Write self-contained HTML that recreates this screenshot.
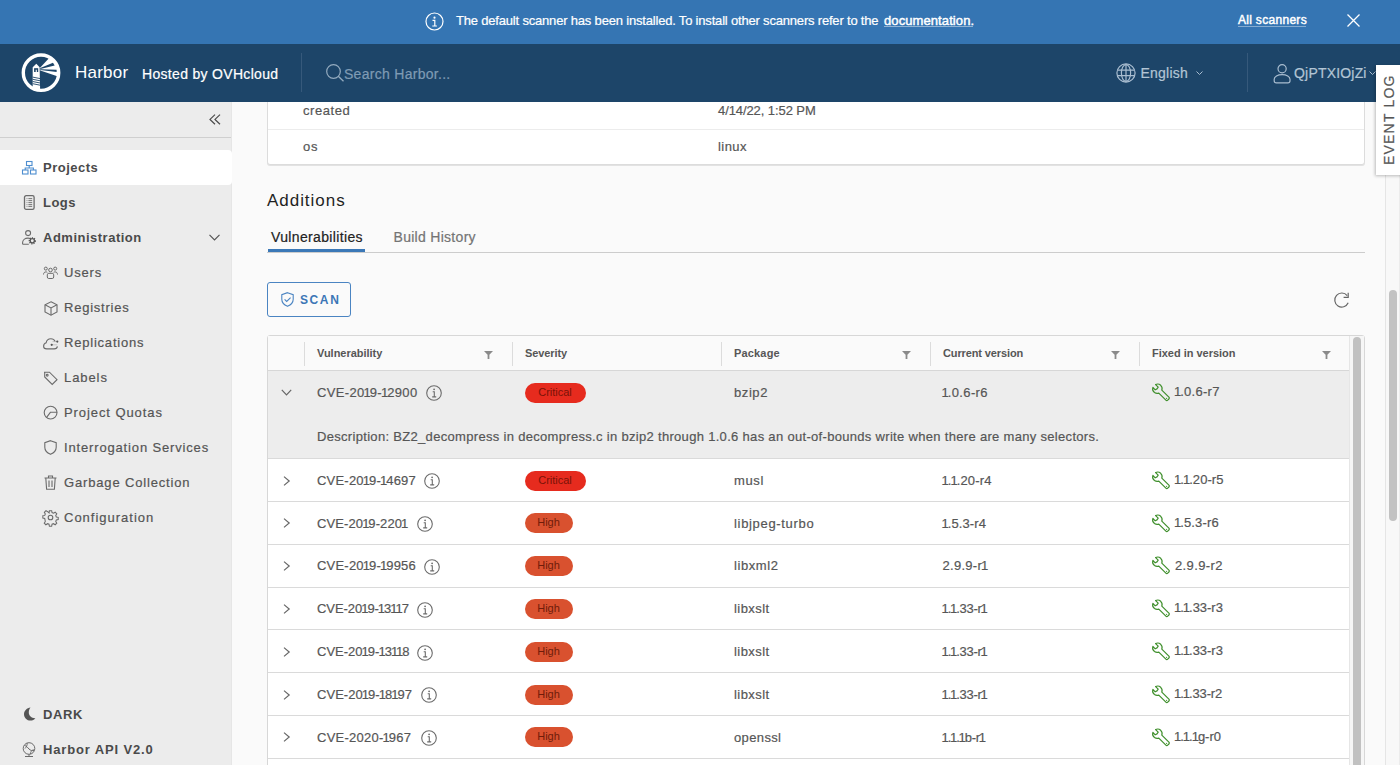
<!DOCTYPE html>
<html><head><meta charset="utf-8">
<style>
*{box-sizing:border-box;}
html,body{margin:0;padding:0;width:1400px;height:765px;overflow:hidden;font-family:"Liberation Sans",sans-serif;background:#fafafa;}
.abs{position:absolute;}
.t{position:absolute;white-space:nowrap;line-height:1;-webkit-text-stroke:0.2px currentColor;}
.t b{-webkit-text-stroke:0;}
svg{position:absolute;overflow:visible;}
#banner{z-index:11;left:0;top:0;width:1400px;height:44px;background:#3575b3;color:#fff;}
#header{z-index:10;left:0;top:43px;width:1400px;height:59px;background:#1d4569;color:#fff;}
#side{z-index:5;left:0;top:102px;width:232px;height:663px;background:#ececec;}
.row{position:absolute;left:268px;width:1081px;height:42.8px;border-bottom:1px solid #dadada;}
.badge{position:absolute;height:20px;border-radius:10px;font-size:11px;line-height:18px;text-align:center;}
.crit{background:#e62b1e;color:#7a1308;width:61px;}
.high{background:#d9512f;color:#6f1c0a;width:48px;}
</style></head>
<body>
<div id="banner" class="abs">
<svg style="left:425px;top:12px" width="19" height="19" viewBox="0 0 19 19"><circle cx="9.5" cy="9.5" r="8.5" fill="none" stroke="#fff" stroke-width="1.2"/><circle cx="9.5" cy="5.7" r="1.1" fill="#fff"/><path d="M7.5 8.3h2.3v5.7M7.3 14h4.6" stroke="#fff" stroke-width="1.2" fill="none"/></svg>
<div class="t" style="left:456px;top:14.00px;font-size:13px;letter-spacing:-0.187px;">The default scanner has been installed. To install other scanners refer to the</div>
<div class="t" style="left:884px;top:14.00px;font-size:13px;-webkit-text-stroke:0.45px #fff;letter-spacing:0.09px;">documentation.</div>
<div class="abs" style="left:884px;top:26px;width:89px;height:1px;background:rgba(255,255,255,.45)"></div>
<div class="t" style="left:1238px;top:13.84px;font-size:12px;-webkit-text-stroke:0.45px #fff;letter-spacing:0.3px;">All scanners</div>
<div class="abs" style="left:1238px;top:25.5px;width:68px;height:1.5px;background:rgba(255,255,255,.4)"></div>
<svg style="left:1347px;top:14px" width="13" height="13" viewBox="0 0 13 13"><path d="M0.5 0.5L12.5 12.5M12.5 0.5L0.5 12.5" stroke="#fff" stroke-width="1.3"/></svg>
</div>
<div id="header" class="abs">
<svg style="left:0px;top:0px" width="70" height="59" viewBox="0 0 70 59">
    <defs><clipPath id="lc"><circle cx="41" cy="29.7" r="17"/></clipPath></defs>
    <circle cx="41" cy="29.7" r="17.7" fill="none" stroke="#fff" stroke-width="3.4"/>
    <g clip-path="url(#lc)">
    <path d="M32.7 24.3L36.3 20.8L39.6 24.3L40.2 50H32.7Z" fill="#fff"/>
    <rect x="34.1" y="25.2" width="4.1" height="3.8" fill="#1d4569"/>
    <rect x="35.7" y="26.7" width="1.1" height="2.4" fill="#fff"/>
    <path d="M32.7 34.1L40.2 35.6M32.7 36.3L40.2 37.8M32.7 38.5L40.2 40M32.7 40.7L40.2 42.2" stroke="#1d4569" stroke-width="0.9"/>
    <path d="M40.3 24.6L56.1 7.6H64V34.6H61.1L40.3 27.5Z" fill="#fff"/>
    <path d="M40.3 25.0L53.0 19.7L54.7 22.4L40.3 26.1Z" fill="#1d4569"/>
    <path d="M40.3 26.3L56.6 26.8L56.6 29.1L40.3 27.0Z" fill="#1d4569"/>
    </g>
  </svg>
<div class="t" style="left:75px;top:21.21px;font-size:17px;-webkit-text-stroke:0;letter-spacing:0.22px;">Harbor</div>
<div class="t" style="left:142px;top:23.75px;font-size:14px;letter-spacing:0.312px;">Hosted by OVHcloud</div>
<div class="abs" style="left:301px;top:10px;width:1px;height:39px;background:#36597b"></div>
<svg style="left:326px;top:21px" width="19" height="18" viewBox="0 0 19 18"><circle cx="7.5" cy="7.5" r="6.8" fill="none" stroke="#94abbf" stroke-width="1.2"/><path d="M12.3 12.3L17.5 17.3" stroke="#94abbf" stroke-width="1.3"/></svg>
<div class="t" style="left:344px;top:23.75px;font-size:14px;color:#7f9bb4;letter-spacing:0.287px;">Search Harbor...</div>
<svg style="left:1116px;top:20px" width="20" height="20" viewBox="0 0 20 20"><g fill="none" stroke="#a9bdd0" stroke-width="1.2"><circle cx="10" cy="10" r="9.1"/><ellipse cx="10" cy="10" rx="4.6" ry="8.4"/><path d="M10 1.5v17M1.8 7.2h16.4M1.8 12.6h16.4"/></g></svg>
<div class="t" style="left:1140.5px;top:23.35px;font-size:14px;color:#b3c5d5;letter-spacing:0.217px;">English</div>
<svg style="left:1196px;top:28px" width="7" height="4" viewBox="0 0 7 4"><path d="M0.5 0.5L3.5 3.5L6.5 0.5" stroke="#a9bdd0" stroke-width="1" fill="none"/></svg>
<div class="abs" style="left:1247px;top:10px;width:1px;height:39px;background:#36597b"></div>
<svg style="left:1273px;top:21px" width="18" height="20" viewBox="0 0 18 20"><g fill="none" stroke="#a9bdd0" stroke-width="1.2"><circle cx="9.1" cy="4.7" r="4.1"/><path d="M1.2 16.8v-1.5c0-2.6 3.4-4.6 7.9-4.6s7.9 2 7.9 4.6v1.5q0 2.1-2.1 2.1h-11.6q-2.1 0-2.1-2.1z"/></g></svg>
<div class="t" style="left:1294px;top:23.35px;font-size:14px;color:#b3c5d5;letter-spacing:0.189px;">QjPTXIOjZi</div>
<svg style="left:1369px;top:28px" width="7" height="4" viewBox="0 0 7 4"><path d="M0.5 0.5L3.5 3.5L6.5 0.5" stroke="#a9bdd0" stroke-width="1" fill="none"/></svg>
</div>
<div id="side" class="abs">
<svg style="left:208.5px;top:12.3px" width="12" height="11" viewBox="0 0 12 11"><path d="M6 0.6L1 5.4L6 10.2M11 0.6L6 5.4L11 10.2" stroke="#4a4a4a" stroke-width="1.2" fill="none"/></svg>
<div class="abs" style="left:0;top:35px;width:232px;height:1px;background:#cfcfcf"></div>
<div class="abs" style="left:231px;top:0;width:1px;height:663px;background:#e6e6e6"></div>
<div class="abs" style="left:0;top:48px;width:232px;height:34.5px;background:#fff;border-radius:0 4px 4px 0"></div>
<svg style="left:22px;top:59px" width="15" height="14" viewBox="0 0 15 14"><g fill="none" stroke="#4e8ed0" stroke-width="1.1"><rect x="4.5" y="0.5" width="5.5" height="4"/><rect x="0.5" y="9" width="5.5" height="4"/><rect x="8.5" y="9" width="5.5" height="4"/><path d="M7.2 4.5v2.5M3.2 9V7h8.2v2"/></g></svg>
<div class="t" style="left:43px;top:58.80px;font-size:13px;font-weight:bold;-webkit-text-stroke:0;color:#4a4a4a;letter-spacing:0.486px;">Projects</div>
<svg style="left:23px;top:93px" width="13" height="15" viewBox="0 0 13 15"><rect x="1.5" y="0.7" width="9.6" height="13.6" rx="1.6" fill="none" stroke="#6b6b6b" stroke-width="1.3"/><path d="M3.6 3.6h0.8M5.4 3.6h3.8M3.6 5.6h0.8M5.4 5.6h3.8M3.6 7.6h0.8M5.4 7.6h3.8M3.6 9.6h0.8M5.4 9.6h3.8M3.6 11.4h0.8M5.4 11.4h3.8" stroke="#777" stroke-width="1"/></svg>
<div class="t" style="left:43px;top:93.80px;font-size:13px;font-weight:bold;-webkit-text-stroke:0;color:#4a4a4a;letter-spacing:0.467px;">Logs</div>
<svg style="left:22px;top:128px" width="15" height="16" viewBox="0 0 15 16"><g fill="none" stroke="#6b6b6b" stroke-width="1.1"><circle cx="6.1" cy="3.1" r="2.5"/><path d="M0.6 14.3V12.6C0.6 9.9 3 8.1 6 8.1C6.9 8.1 7.6 8.2 8.2 8.5M0.6 14.3H6.8"/></g><circle cx="10.3" cy="10.8" r="2.9" fill="none" stroke="#555" stroke-width="1.5" stroke-dasharray="1.1 1.05"/><circle cx="10.3" cy="10.8" r="2.1" fill="none" stroke="#555" stroke-width="1.3"/></svg>
<div class="t" style="left:43px;top:128.80px;font-size:13px;font-weight:bold;-webkit-text-stroke:0;color:#4a4a4a;letter-spacing:0.5px;">Administration</div>
<svg style="left:209px;top:132px" width="11" height="7" viewBox="0 0 11 7"><path d="M0.5 0.8L5.5 5.8L10.5 0.8" stroke="#555" stroke-width="1.2" fill="none"/></svg>
<svg style="left:43px;top:164px" width="15" height="13" viewBox="0 0 15 13"><g fill="none" stroke="#6b6b6b" stroke-width="1"><circle cx="7.5" cy="4" r="1.8"/><circle cx="2.8" cy="2.6" r="1.5"/><circle cx="12.2" cy="2.6" r="1.5"/><rect x="4.3" y="7.3" width="6.4" height="5.2" rx="1.5"/><path d="M0.5 8.5c0-1.5 1-2.6 2.4-2.6c0.6 0 1 0.2 1.4 0.4M14.5 8.5c0-1.5-1-2.6-2.4-2.6c-0.6 0-1 0.2-1.4 0.4"/></g></svg>
<div class="t" style="left:64px;top:164.40px;font-size:13px;color:#555;letter-spacing:0.825px;">Users</div>
<svg style="left:44px;top:199px" width="14" height="15" viewBox="0 0 14 15"><g fill="none" stroke="#6b6b6b" stroke-width="1.1"><path d="M7 0.8L13 3.8V11L7 14.2L1 11V3.8Z"/><path d="M1 3.8L7 7L13 3.8M7 7v7.2"/></g></svg>
<div class="t" style="left:64px;top:199.40px;font-size:13px;color:#555;letter-spacing:0.767px;">Registries</div>
<svg style="left:43px;top:235.5px" width="16" height="12" viewBox="0 0 16 12"><g fill="none" stroke="#6b6b6b" stroke-width="1.1"><path d="M12.2 3.4C11.4 1.7 9.8 0.7 7.9 0.7C5.4 0.7 3.5 2.5 3.2 4.8C1.7 5.3 0.6 6.6 0.6 8.2C0.6 9.9 2 10.9 3.7 10.9H11.2C12.9 10.9 14.2 10 14.4 8.4"/><path d="M8.8 6.8H14.2M9.5 3.6H14.5" stroke-width="0.6" stroke="#aaa"/></g><circle cx="14.3" cy="3.6" r="1.1" fill="#555"/><circle cx="8.7" cy="6.8" r="1.1" fill="#555"/></svg>
<div class="t" style="left:64px;top:234.40px;font-size:13px;color:#555;letter-spacing:0.791px;">Replications</div>
<svg style="left:43px;top:269px" width="15" height="14" viewBox="0 0 15 14"><g fill="none" stroke="#6b6b6b" stroke-width="1.1"><path d="M1 1.2h5.5l7.5 7.5l-4.8 4.8L1.7 6V1.2z"/><circle cx="4.2" cy="4.2" r="0.9"/></g></svg>
<div class="t" style="left:64px;top:269.40px;font-size:13px;color:#555;letter-spacing:0.92px;">Labels</div>
<svg style="left:43px;top:303px" width="15" height="15" viewBox="0 0 15 15"><g fill="none" stroke="#6b6b6b" stroke-width="1.1"><circle cx="7.6" cy="7.6" r="6.4"/><path d="M3.6 12.3L7.4 7.3H14.1"/></g></svg>
<div class="t" style="left:64px;top:304.40px;font-size:13px;color:#555;letter-spacing:0.915px;">Project Quotas</div>
<svg style="left:44px;top:338px" width="13" height="15" viewBox="0 0 13 15"><path d="M6.5 0.7L12.2 2.7V7.2c0 3.3-2.5 5.8-5.7 7.1C3.3 13 0.8 10.5 0.8 7.2V2.7Z" fill="none" stroke="#6b6b6b" stroke-width="1.1"/></svg>
<div class="t" style="left:64px;top:339.40px;font-size:13px;color:#555;letter-spacing:0.843px;">Interrogation Services</div>
<svg style="left:44px;top:373px" width="13" height="15" viewBox="0 0 13 15"><g fill="none" stroke="#6b6b6b" stroke-width="1.1"><path d="M0.5 3h12M4.5 3V1h4v2M1.8 3l0.8 11.2h7.8L11.2 3M5 5.5v6.5M8 5.5v6.5"/></g></svg>
<div class="t" style="left:64px;top:374.40px;font-size:13px;color:#555;letter-spacing:0.841px;">Garbage Collection</div>
<svg style="left:43px;top:408px" width="15" height="15" viewBox="0 0 15 15"><g fill="none" stroke="#6b6b6b" stroke-width="1.1"><circle cx="7.5" cy="7.5" r="2.3"/><path d="M6.3 0.7h2.4l0.4 2l1.5 0.7l1.8-1.1l1.7 1.7l-1.1 1.8l0.6 1.5l2 0.4v2.4l-2 0.4l-0.6 1.5l1.1 1.8l-1.7 1.7l-1.8-1.1l-1.5 0.6l-0.4 2H6.3l-0.4-2l-1.5-0.6l-1.8 1.1l-1.7-1.7l1.1-1.8L1.4 8.9l-2-0.4V6.1l2-0.4l0.6-1.5L1 2.4l1.7-1.7l1.8 1.1L6 3.1z" transform="translate(0.4 0) scale(0.95)"/></g></svg>
<div class="t" style="left:64px;top:409.40px;font-size:13px;color:#555;letter-spacing:0.992px;">Configuration</div>
<svg style="left:23px;top:605px" width="13" height="14" viewBox="0 0 13 14"><path d="M7.5 0.5C4 0.9 1 3.7 1 7.2C1 10.8 3.9 13.6 7.5 13.6c2 0 3.7-0.9 4.9-2.3C8.9 11.6 5.8 9 5.8 5.6C5.8 3.5 6.4 1.8 7.5 0.5Z" fill="#555"/></svg>
<div class="t" style="left:43px;top:606.30px;font-size:13px;font-weight:bold;-webkit-text-stroke:0;color:#4a4a4a;letter-spacing:0.6px;">DARK</div>
<svg style="left:22px;top:640px" width="14" height="16" viewBox="0 0 14 16"><g fill="none" stroke="#6b6b6b" stroke-width="1"><circle cx="7" cy="6.5" r="5.8"/><path d="M2.5 3.5c2 0.3 3 2 4.5 3.5s3 1.8 5 1.5M5 1c0.5 2-0.5 4-2 5.5M8.5 12c0-2 1-3.5 3-4.5M3 14.5h8M7 12.3v2.2"/></g></svg>
<div class="t" style="left:43px;top:641.20px;font-size:13px;font-weight:bold;-webkit-text-stroke:0;color:#4a4a4a;letter-spacing:0.85px;">Harbor API V2.0</div>
</div>
<div class="abs" style="left:267px;top:60px;width:1098px;height:105px;background:#fff;border:1px solid #dcdcdc;border-radius:3px;box-shadow:0 1px 0 #e2e2e2"></div>
<div class="abs" style="left:268px;top:128.5px;width:1096px;height:1px;background:#ececec"></div>
<div class="t" style="left:303px;top:104.00px;font-size:13px;color:#565656;letter-spacing:0.567px;">created</div>
<div class="t" style="left:718px;top:104.00px;font-size:13px;color:#565656;letter-spacing:-0.087px;">4/14/22, 1:52 PM</div>
<div class="t" style="left:303px;top:140.10px;font-size:13px;color:#565656;letter-spacing:0.8px;">os</div>
<div class="t" style="left:718px;top:139.70px;font-size:13px;color:#565656;letter-spacing:0.425px;">linux</div>
<div class="t" style="left:267px;top:192.21px;font-size:17px;color:#1f1f1f;-webkit-text-stroke:0;letter-spacing:0.962px;">Additions</div>
<div class="t" style="left:271px;top:229.55px;font-size:14px;color:#222;letter-spacing:0.35px;">Vulnerabilities</div>
<div class="t" style="left:393.5px;top:229.55px;font-size:14px;color:#747474;letter-spacing:0.292px;">Build History</div>
<div class="abs" style="left:267px;top:252px;width:1098px;height:1px;background:#cccccc"></div>
<div class="abs" style="left:268px;top:249px;width:97px;height:3px;background:#3b78b7"></div>
<div class="abs" style="left:267px;top:282px;width:84px;height:35px;border:1px solid #4a84c2;border-radius:3px;"></div>
<svg style="left:281px;top:292px" width="13" height="15" viewBox="0 0 13 15"><path d="M6.5 0.7L12.2 2.7V7.2c0 3.3-2.5 5.8-5.7 7.1C3.3 13 0.8 10.5 0.8 7.2V2.7Z" fill="none" stroke="#4a84c2" stroke-width="1.1"/><path d="M3.6 7.4L5.7 9.5L9.6 5.6" fill="none" stroke="#4a84c2" stroke-width="1.1"/></svg>
<div class="t" style="left:300px;top:294.44px;font-size:12px;font-weight:bold;-webkit-text-stroke:0;color:#3b76b6;letter-spacing:1.6px;">SCAN</div>
<svg style="left:1334px;top:292px" width="17" height="17" viewBox="0 0 17 17"><path d="M14.2 10.8A7 7 0 1 1 13.2 3.6" fill="none" stroke="#666" stroke-width="1.2"/><path d="M9.6 5.3h4.6V0.7" fill="none" stroke="#666" stroke-width="1.2"/></svg>
<div class="abs" style="left:267px;top:335px;width:1098px;height:460px;background:#fff;border:1px solid #d7d7d7;border-radius:3px;"></div>
<div class="abs" style="left:268px;top:336px;width:1081px;height:35px;background:#fafafa;border-bottom:1px solid #d7d7d7"></div>
<div class="abs" style="left:304px;top:342px;width:1px;height:24px;background:#dcdcdc"></div>
<div class="abs" style="left:512px;top:342px;width:1px;height:24px;background:#dcdcdc"></div>
<div class="abs" style="left:721px;top:342px;width:1px;height:24px;background:#dcdcdc"></div>
<div class="abs" style="left:930px;top:342px;width:1px;height:24px;background:#dcdcdc"></div>
<div class="abs" style="left:1139px;top:342px;width:1px;height:24px;background:#dcdcdc"></div>
<div class="t" style="left:317px;top:347.59px;font-size:11px;font-weight:bold;-webkit-text-stroke:0;color:#565656;letter-spacing:-0.025px;">Vulnerability</div>
<div class="t" style="left:525px;top:347.59px;font-size:11px;font-weight:bold;-webkit-text-stroke:0;color:#565656;letter-spacing:-0.086px;">Severity</div>
<div class="t" style="left:734px;top:347.59px;font-size:11px;font-weight:bold;-webkit-text-stroke:0;color:#565656;letter-spacing:0.167px;">Package</div>
<div class="t" style="left:943px;top:347.59px;font-size:11px;font-weight:bold;-webkit-text-stroke:0;color:#565656;letter-spacing:-0.121px;">Current version</div>
<div class="t" style="left:1152px;top:347.59px;font-size:11px;font-weight:bold;-webkit-text-stroke:0;color:#565656;letter-spacing:-0.02px;">Fixed in version</div>
<svg style="left:484px;top:351px" width="9" height="8" viewBox="0 0 9 8"><path d="M0 0h9L5.4 3.8V8H3.6V3.8Z" fill="#8a8a8a"/></svg>
<svg style="left:902px;top:351px" width="9" height="8" viewBox="0 0 9 8"><path d="M0 0h9L5.4 3.8V8H3.6V3.8Z" fill="#8a8a8a"/></svg>
<svg style="left:1111px;top:351px" width="9" height="8" viewBox="0 0 9 8"><path d="M0 0h9L5.4 3.8V8H3.6V3.8Z" fill="#8a8a8a"/></svg>
<svg style="left:1322px;top:351px" width="9" height="8" viewBox="0 0 9 8"><path d="M0 0h9L5.4 3.8V8H3.6V3.8Z" fill="#8a8a8a"/></svg>
<div class="row" style="top:371px;height:87.5px;background:#ededed"></div>
<div class="row" style="top:459.20px"></div>
<div class="row" style="top:502.00px"></div>
<div class="row" style="top:544.80px"></div>
<div class="row" style="top:587.60px"></div>
<div class="row" style="top:630.40px"></div>
<div class="row" style="top:673.20px"></div>
<div class="row" style="top:716.00px"></div>
<div class="row" style="top:758.80px"></div>
<svg style="left:281px;top:389.0px" width="11" height="7" viewBox="0 0 11 7"><path d="M0.8 0.8L5.5 5.8L10.2 0.8" stroke="#666" stroke-width="1.2" fill="none"/></svg>
<div class="t" style="left:317px;top:385.80px;font-size:13px;color:#565656;letter-spacing:0.331px;">CVE-20<span style="margin-left:-1.0px;letter-spacing:-1.0px">1</span>9-<span style="margin-left:-1.0px;letter-spacing:-1.0px">1</span>2900</div>
<svg style="left:425.7px;top:385.3px" width="16" height="16" viewBox="0 0 16 16"><circle cx="8" cy="8" r="7.3" fill="none" stroke="#6b6b6b" stroke-width="1.1"/><circle cx="8.1" cy="4.3" r="0.9" fill="#6b6b6b"/><path d="M6.7 6.8h1.6v5.1M6.2 11.9h4" stroke="#6b6b6b" stroke-width="1.1" fill="none"/></svg>
<div class="badge crit" style="left:524.5px;top:382.5px">Critical</div>
<div class="t" style="left:734px;top:385.80px;font-size:13px;color:#565656;letter-spacing:0.575px;">bzip2</div>
<div class="t" style="left:942.5px;top:385.80px;font-size:13px;color:#565656;letter-spacing:0.371px;"><span style="margin-left:-1.0px;letter-spacing:-1.0px">1</span>.0.6-r6</div>
<svg style="left:1152.0px;top:382.7px" width="19" height="19" viewBox="0 0 19 19"><path d="M3.6 1.6L6.2 4.2L5 5.9L3.2 6.8L0.9 4.4C0.3 6.2 0.9 8.3 2.5 9.5C3.8 10.4 5.4 10.6 6.8 10.1L13.9 17.2C14.4 17.7 15.2 17.7 15.7 17.2L16.9 16C17.4 15.5 17.4 14.7 16.9 14.2L9.8 7.1C10.4 5.5 10 3.6 8.7 2.3C7.3 1 5.3 0.7 3.6 1.6Z" fill="none" stroke="#3f8f2c" stroke-width="1.2" stroke-linejoin="round"/><circle cx="14.6" cy="15.3" r="0.6" fill="#3f8f2c"/></svg>
<div class="t" style="left:1175px;top:385.00px;font-size:13px;color:#565656;letter-spacing:0.271px;"><span style="margin-left:-1.0px;letter-spacing:-1.0px">1</span>.0.6-r7</div>
<svg style="left:282.5px;top:475.5px" width="8" height="10" viewBox="0 0 8 10"><path d="M1 0.6L6.2 5L1 9.4" stroke="#666" stroke-width="1.2" fill="none"/></svg>
<div class="t" style="left:317px;top:473.80px;font-size:13px;color:#565656;letter-spacing:0.208px;">CVE-20<span style="margin-left:-1.0px;letter-spacing:-1.0px">1</span>9-<span style="margin-left:-1.0px;letter-spacing:-1.0px">1</span>4697</div>
<svg style="left:424.3px;top:473.3px" width="16" height="16" viewBox="0 0 16 16"><circle cx="8" cy="8" r="7.3" fill="none" stroke="#6b6b6b" stroke-width="1.1"/><circle cx="8.1" cy="4.3" r="0.9" fill="#6b6b6b"/><path d="M6.7 6.8h1.6v5.1M6.2 11.9h4" stroke="#6b6b6b" stroke-width="1.1" fill="none"/></svg>
<div class="badge crit" style="left:524.5px;top:470.5px">Critical</div>
<div class="t" style="left:734px;top:473.80px;font-size:13px;color:#565656;letter-spacing:0.633px;">musl</div>
<div class="t" style="left:942.5px;top:473.80px;font-size:13px;color:#565656;letter-spacing:0.138px;"><span style="margin-left:-1.0px;letter-spacing:-1.0px">1</span>.<span style="margin-left:-1.0px;letter-spacing:-1.0px">1</span>.20-r4</div>
<svg style="left:1152.0px;top:470.7px" width="19" height="19" viewBox="0 0 19 19"><path d="M3.6 1.6L6.2 4.2L5 5.9L3.2 6.8L0.9 4.4C0.3 6.2 0.9 8.3 2.5 9.5C3.8 10.4 5.4 10.6 6.8 10.1L13.9 17.2C14.4 17.7 15.2 17.7 15.7 17.2L16.9 16C17.4 15.5 17.4 14.7 16.9 14.2L9.8 7.1C10.4 5.5 10 3.6 8.7 2.3C7.3 1 5.3 0.7 3.6 1.6Z" fill="none" stroke="#3f8f2c" stroke-width="1.2" stroke-linejoin="round"/><circle cx="14.6" cy="15.3" r="0.6" fill="#3f8f2c"/></svg>
<div class="t" style="left:1175px;top:473.00px;font-size:13px;color:#565656;letter-spacing:0.075px;"><span style="margin-left:-1.0px;letter-spacing:-1.0px">1</span>.<span style="margin-left:-1.0px;letter-spacing:-1.0px">1</span>.20-r5</div>
<svg style="left:282.5px;top:518.3px" width="8" height="10" viewBox="0 0 8 10"><path d="M1 0.6L6.2 5L1 9.4" stroke="#666" stroke-width="1.2" fill="none"/></svg>
<div class="t" style="left:317px;top:516.60px;font-size:13px;color:#565656;letter-spacing:0.1px;">CVE-20<span style="margin-left:-1.0px;letter-spacing:-1.0px">1</span>9-220<span style="margin-left:-1.0px;letter-spacing:-1.0px">1</span></div>
<svg style="left:417.0px;top:516.1px" width="16" height="16" viewBox="0 0 16 16"><circle cx="8" cy="8" r="7.3" fill="none" stroke="#6b6b6b" stroke-width="1.1"/><circle cx="8.1" cy="4.3" r="0.9" fill="#6b6b6b"/><path d="M6.7 6.8h1.6v5.1M6.2 11.9h4" stroke="#6b6b6b" stroke-width="1.1" fill="none"/></svg>
<div class="badge high" style="left:524.5px;top:513.3px">High</div>
<div class="t" style="left:734px;top:516.60px;font-size:13px;color:#565656;letter-spacing:0.675px;">libjpeg-turbo</div>
<div class="t" style="left:942.5px;top:516.60px;font-size:13px;color:#565656;letter-spacing:0.114px;"><span style="margin-left:-1.0px;letter-spacing:-1.0px">1</span>.5.3-r4</div>
<svg style="left:1152.0px;top:513.5px" width="19" height="19" viewBox="0 0 19 19"><path d="M3.6 1.6L6.2 4.2L5 5.9L3.2 6.8L0.9 4.4C0.3 6.2 0.9 8.3 2.5 9.5C3.8 10.4 5.4 10.6 6.8 10.1L13.9 17.2C14.4 17.7 15.2 17.7 15.7 17.2L16.9 16C17.4 15.5 17.4 14.7 16.9 14.2L9.8 7.1C10.4 5.5 10 3.6 8.7 2.3C7.3 1 5.3 0.7 3.6 1.6Z" fill="none" stroke="#3f8f2c" stroke-width="1.2" stroke-linejoin="round"/><circle cx="14.6" cy="15.3" r="0.6" fill="#3f8f2c"/></svg>
<div class="t" style="left:1175px;top:515.80px;font-size:13px;color:#565656;letter-spacing:0.143px;"><span style="margin-left:-1.0px;letter-spacing:-1.0px">1</span>.5.3-r6</div>
<svg style="left:282.5px;top:561.1px" width="8" height="10" viewBox="0 0 8 10"><path d="M1 0.6L6.2 5L1 9.4" stroke="#666" stroke-width="1.2" fill="none"/></svg>
<div class="t" style="left:317px;top:559.40px;font-size:13px;color:#565656;letter-spacing:0.208px;">CVE-20<span style="margin-left:-1.0px;letter-spacing:-1.0px">1</span>9-<span style="margin-left:-1.0px;letter-spacing:-1.0px">1</span>9956</div>
<svg style="left:424.3px;top:558.9px" width="16" height="16" viewBox="0 0 16 16"><circle cx="8" cy="8" r="7.3" fill="none" stroke="#6b6b6b" stroke-width="1.1"/><circle cx="8.1" cy="4.3" r="0.9" fill="#6b6b6b"/><path d="M6.7 6.8h1.6v5.1M6.2 11.9h4" stroke="#6b6b6b" stroke-width="1.1" fill="none"/></svg>
<div class="badge high" style="left:524.5px;top:556.1px">High</div>
<div class="t" style="left:734px;top:559.40px;font-size:13px;color:#565656;letter-spacing:0.583px;">libxml2</div>
<div class="t" style="left:942.5px;top:559.40px;font-size:13px;color:#565656;letter-spacing:0.286px;">2.9.9-r<span style="margin-left:-1.0px;letter-spacing:-1.0px">1</span></div>
<svg style="left:1152.0px;top:556.3px" width="19" height="19" viewBox="0 0 19 19"><path d="M3.6 1.6L6.2 4.2L5 5.9L3.2 6.8L0.9 4.4C0.3 6.2 0.9 8.3 2.5 9.5C3.8 10.4 5.4 10.6 6.8 10.1L13.9 17.2C14.4 17.7 15.2 17.7 15.7 17.2L16.9 16C17.4 15.5 17.4 14.7 16.9 14.2L9.8 7.1C10.4 5.5 10 3.6 8.7 2.3C7.3 1 5.3 0.7 3.6 1.6Z" fill="none" stroke="#3f8f2c" stroke-width="1.2" stroke-linejoin="round"/><circle cx="14.6" cy="15.3" r="0.6" fill="#3f8f2c"/></svg>
<div class="t" style="left:1175px;top:558.60px;font-size:13px;color:#565656;letter-spacing:0.371px;">2.9.9-r2</div>
<svg style="left:282.5px;top:603.9px" width="8" height="10" viewBox="0 0 8 10"><path d="M1 0.6L6.2 5L1 9.4" stroke="#666" stroke-width="1.2" fill="none"/></svg>
<div class="t" style="left:317px;top:602.20px;font-size:13px;color:#565656;letter-spacing:-0.062px;">CVE-20<span style="margin-left:-1.0px;letter-spacing:-1.0px">1</span>9-<span style="margin-left:-1.0px;letter-spacing:-1.0px">1</span>3<span style="margin-left:-1.0px;letter-spacing:-1.0px">1</span><span style="margin-left:-1.0px;letter-spacing:-1.0px">1</span>7</div>
<svg style="left:417.1px;top:601.7px" width="16" height="16" viewBox="0 0 16 16"><circle cx="8" cy="8" r="7.3" fill="none" stroke="#6b6b6b" stroke-width="1.1"/><circle cx="8.1" cy="4.3" r="0.9" fill="#6b6b6b"/><path d="M6.7 6.8h1.6v5.1M6.2 11.9h4" stroke="#6b6b6b" stroke-width="1.1" fill="none"/></svg>
<div class="badge high" style="left:524.5px;top:598.9px">High</div>
<div class="t" style="left:734px;top:602.20px;font-size:13px;color:#565656;letter-spacing:0.433px;">libxslt</div>
<div class="t" style="left:942.5px;top:602.20px;font-size:13px;color:#565656;letter-spacing:-0.312px;"><span style="margin-left:-1.0px;letter-spacing:-1.0px">1</span>.<span style="margin-left:-1.0px;letter-spacing:-1.0px">1</span>.33-r<span style="margin-left:-1.0px;letter-spacing:-1.0px">1</span></div>
<svg style="left:1152.0px;top:599.1px" width="19" height="19" viewBox="0 0 19 19"><path d="M3.6 1.6L6.2 4.2L5 5.9L3.2 6.8L0.9 4.4C0.3 6.2 0.9 8.3 2.5 9.5C3.8 10.4 5.4 10.6 6.8 10.1L13.9 17.2C14.4 17.7 15.2 17.7 15.7 17.2L16.9 16C17.4 15.5 17.4 14.7 16.9 14.2L9.8 7.1C10.4 5.5 10 3.6 8.7 2.3C7.3 1 5.3 0.7 3.6 1.6Z" fill="none" stroke="#3f8f2c" stroke-width="1.2" stroke-linejoin="round"/><circle cx="14.6" cy="15.3" r="0.6" fill="#3f8f2c"/></svg>
<div class="t" style="left:1175px;top:601.40px;font-size:13px;color:#565656;letter-spacing:-0.025px;"><span style="margin-left:-1.0px;letter-spacing:-1.0px">1</span>.<span style="margin-left:-1.0px;letter-spacing:-1.0px">1</span>.33-r3</div>
<svg style="left:282.5px;top:646.7px" width="8" height="10" viewBox="0 0 8 10"><path d="M1 0.6L6.2 5L1 9.4" stroke="#666" stroke-width="1.2" fill="none"/></svg>
<div class="t" style="left:317px;top:645.00px;font-size:13px;color:#565656;letter-spacing:0.008px;">CVE-20<span style="margin-left:-1.0px;letter-spacing:-1.0px">1</span>9-<span style="margin-left:-1.0px;letter-spacing:-1.0px">1</span>3<span style="margin-left:-1.0px;letter-spacing:-1.0px">1</span><span style="margin-left:-1.0px;letter-spacing:-1.0px">1</span>8</div>
<svg style="left:417.0px;top:644.5px" width="16" height="16" viewBox="0 0 16 16"><circle cx="8" cy="8" r="7.3" fill="none" stroke="#6b6b6b" stroke-width="1.1"/><circle cx="8.1" cy="4.3" r="0.9" fill="#6b6b6b"/><path d="M6.7 6.8h1.6v5.1M6.2 11.9h4" stroke="#6b6b6b" stroke-width="1.1" fill="none"/></svg>
<div class="badge high" style="left:524.5px;top:641.7px">High</div>
<div class="t" style="left:734px;top:645.00px;font-size:13px;color:#565656;letter-spacing:0.433px;">libxslt</div>
<div class="t" style="left:942.5px;top:645.00px;font-size:13px;color:#565656;letter-spacing:-0.312px;"><span style="margin-left:-1.0px;letter-spacing:-1.0px">1</span>.<span style="margin-left:-1.0px;letter-spacing:-1.0px">1</span>.33-r<span style="margin-left:-1.0px;letter-spacing:-1.0px">1</span></div>
<svg style="left:1152.0px;top:641.9px" width="19" height="19" viewBox="0 0 19 19"><path d="M3.6 1.6L6.2 4.2L5 5.9L3.2 6.8L0.9 4.4C0.3 6.2 0.9 8.3 2.5 9.5C3.8 10.4 5.4 10.6 6.8 10.1L13.9 17.2C14.4 17.7 15.2 17.7 15.7 17.2L16.9 16C17.4 15.5 17.4 14.7 16.9 14.2L9.8 7.1C10.4 5.5 10 3.6 8.7 2.3C7.3 1 5.3 0.7 3.6 1.6Z" fill="none" stroke="#3f8f2c" stroke-width="1.2" stroke-linejoin="round"/><circle cx="14.6" cy="15.3" r="0.6" fill="#3f8f2c"/></svg>
<div class="t" style="left:1175px;top:644.20px;font-size:13px;color:#565656;letter-spacing:-0.025px;"><span style="margin-left:-1.0px;letter-spacing:-1.0px">1</span>.<span style="margin-left:-1.0px;letter-spacing:-1.0px">1</span>.33-r3</div>
<svg style="left:282.5px;top:689.5px" width="8" height="10" viewBox="0 0 8 10"><path d="M1 0.6L6.2 5L1 9.4" stroke="#666" stroke-width="1.2" fill="none"/></svg>
<div class="t" style="left:317px;top:687.80px;font-size:13px;color:#565656;letter-spacing:0.046px;">CVE-20<span style="margin-left:-1.0px;letter-spacing:-1.0px">1</span>9-<span style="margin-left:-1.0px;letter-spacing:-1.0px">1</span>8<span style="margin-left:-1.0px;letter-spacing:-1.0px">1</span>97</div>
<svg style="left:421.0px;top:687.3px" width="16" height="16" viewBox="0 0 16 16"><circle cx="8" cy="8" r="7.3" fill="none" stroke="#6b6b6b" stroke-width="1.1"/><circle cx="8.1" cy="4.3" r="0.9" fill="#6b6b6b"/><path d="M6.7 6.8h1.6v5.1M6.2 11.9h4" stroke="#6b6b6b" stroke-width="1.1" fill="none"/></svg>
<div class="badge high" style="left:524.5px;top:684.5px">High</div>
<div class="t" style="left:734px;top:687.80px;font-size:13px;color:#565656;letter-spacing:0.433px;">libxslt</div>
<div class="t" style="left:942.5px;top:687.80px;font-size:13px;color:#565656;letter-spacing:-0.312px;"><span style="margin-left:-1.0px;letter-spacing:-1.0px">1</span>.<span style="margin-left:-1.0px;letter-spacing:-1.0px">1</span>.33-r<span style="margin-left:-1.0px;letter-spacing:-1.0px">1</span></div>
<svg style="left:1152.0px;top:684.7px" width="19" height="19" viewBox="0 0 19 19"><path d="M3.6 1.6L6.2 4.2L5 5.9L3.2 6.8L0.9 4.4C0.3 6.2 0.9 8.3 2.5 9.5C3.8 10.4 5.4 10.6 6.8 10.1L13.9 17.2C14.4 17.7 15.2 17.7 15.7 17.2L16.9 16C17.4 15.5 17.4 14.7 16.9 14.2L9.8 7.1C10.4 5.5 10 3.6 8.7 2.3C7.3 1 5.3 0.7 3.6 1.6Z" fill="none" stroke="#3f8f2c" stroke-width="1.2" stroke-linejoin="round"/><circle cx="14.6" cy="15.3" r="0.6" fill="#3f8f2c"/></svg>
<div class="t" style="left:1175px;top:687.00px;font-size:13px;color:#565656;letter-spacing:-0.125px;"><span style="margin-left:-1.0px;letter-spacing:-1.0px">1</span>.<span style="margin-left:-1.0px;letter-spacing:-1.0px">1</span>.33-r2</div>
<svg style="left:282.5px;top:732.3px" width="8" height="10" viewBox="0 0 8 10"><path d="M1 0.6L6.2 5L1 9.4" stroke="#666" stroke-width="1.2" fill="none"/></svg>
<div class="t" style="left:317px;top:730.60px;font-size:13px;color:#565656;letter-spacing:0.25px;">CVE-2020-<span style="margin-left:-1.0px;letter-spacing:-1.0px">1</span>967</div>
<svg style="left:421.0px;top:730.1px" width="16" height="16" viewBox="0 0 16 16"><circle cx="8" cy="8" r="7.3" fill="none" stroke="#6b6b6b" stroke-width="1.1"/><circle cx="8.1" cy="4.3" r="0.9" fill="#6b6b6b"/><path d="M6.7 6.8h1.6v5.1M6.2 11.9h4" stroke="#6b6b6b" stroke-width="1.1" fill="none"/></svg>
<div class="badge high" style="left:524.5px;top:727.3px">High</div>
<div class="t" style="left:734px;top:730.60px;font-size:13px;color:#565656;letter-spacing:0.367px;">openssl</div>
<div class="t" style="left:942.5px;top:730.60px;font-size:13px;color:#565656;letter-spacing:-0.3px;"><span style="margin-left:-1.0px;letter-spacing:-1.0px">1</span>.<span style="margin-left:-1.0px;letter-spacing:-1.0px">1</span>.<span style="margin-left:-1.0px;letter-spacing:-1.0px">1</span>b-r<span style="margin-left:-1.0px;letter-spacing:-1.0px">1</span></div>
<svg style="left:1152.0px;top:727.5px" width="19" height="19" viewBox="0 0 19 19"><path d="M3.6 1.6L6.2 4.2L5 5.9L3.2 6.8L0.9 4.4C0.3 6.2 0.9 8.3 2.5 9.5C3.8 10.4 5.4 10.6 6.8 10.1L13.9 17.2C14.4 17.7 15.2 17.7 15.7 17.2L16.9 16C17.4 15.5 17.4 14.7 16.9 14.2L9.8 7.1C10.4 5.5 10 3.6 8.7 2.3C7.3 1 5.3 0.7 3.6 1.6Z" fill="none" stroke="#3f8f2c" stroke-width="1.2" stroke-linejoin="round"/><circle cx="14.6" cy="15.3" r="0.6" fill="#3f8f2c"/></svg>
<div class="t" style="left:1175px;top:729.80px;font-size:13px;color:#565656;letter-spacing:-0.025px;"><span style="margin-left:-1.0px;letter-spacing:-1.0px">1</span>.<span style="margin-left:-1.0px;letter-spacing:-1.0px">1</span>.<span style="margin-left:-1.0px;letter-spacing:-1.0px">1</span>g-r0</div>
<svg style="left:282.5px;top:775.1px" width="8" height="10" viewBox="0 0 8 10"><path d="M1 0.6L6.2 5L1 9.4" stroke="#666" stroke-width="1.2" fill="none"/></svg>
<div class="t" style="left:317px;top:773.40px;font-size:13px;color:#565656;letter-spacing:0.2px;">CVE-2020-28928</div>
<svg style="left:424.3px;top:772.9px" width="16" height="16" viewBox="0 0 16 16"><circle cx="8" cy="8" r="7.3" fill="none" stroke="#6b6b6b" stroke-width="1.1"/><circle cx="8.1" cy="4.3" r="0.9" fill="#6b6b6b"/><path d="M6.7 6.8h1.6v5.1M6.2 11.9h4" stroke="#6b6b6b" stroke-width="1.1" fill="none"/></svg>
<div class="badge high" style="left:524.5px;top:770.1px">High</div>
<div class="t" style="left:734px;top:773.40px;font-size:13px;color:#565656;letter-spacing:0.633px;">musl</div>
<div class="t" style="left:942.5px;top:773.40px;font-size:13px;color:#565656;letter-spacing:0.138px;"><span style="margin-left:-1.0px;letter-spacing:-1.0px">1</span>.<span style="margin-left:-1.0px;letter-spacing:-1.0px">1</span>.20-r4</div>
<svg style="left:1152.0px;top:770.3px" width="19" height="19" viewBox="0 0 19 19"><path d="M3.6 1.6L6.2 4.2L5 5.9L3.2 6.8L0.9 4.4C0.3 6.2 0.9 8.3 2.5 9.5C3.8 10.4 5.4 10.6 6.8 10.1L13.9 17.2C14.4 17.7 15.2 17.7 15.7 17.2L16.9 16C17.4 15.5 17.4 14.7 16.9 14.2L9.8 7.1C10.4 5.5 10 3.6 8.7 2.3C7.3 1 5.3 0.7 3.6 1.6Z" fill="none" stroke="#3f8f2c" stroke-width="1.2" stroke-linejoin="round"/><circle cx="14.6" cy="15.3" r="0.6" fill="#3f8f2c"/></svg>
<div class="t" style="left:1175px;top:772.60px;font-size:13px;color:#565656;letter-spacing:0.2px;"><span style="margin-left:-1.0px;letter-spacing:-1.0px">1</span>.<span style="margin-left:-1.0px;letter-spacing:-1.0px">1</span>.20-r6</div>
<div class="t" style="left:317px;top:429.60px;font-size:13px;color:#565656;letter-spacing:0.312px;">Description: BZ2_decompress in decompress.c in bzip2 through 1.0.6 has an out-of-bounds write when there are many selectors.</div>
<div class="abs" style="left:1349px;top:336px;width:15px;height:429px;background:#f6f6f6;border-left:1px solid #e6e6e6"></div>
<div class="abs" style="left:1353px;top:337px;width:8px;height:440px;background:#c1c1c1;border-radius:4px"></div>
<div class="abs" style="left:1385px;top:102px;width:15px;height:663px;background:#f8f8f8;border-left:1px solid #e5e5e5"></div>
<div class="abs" style="left:1399px;top:102px;width:1px;height:663px;background:#ececec"></div>
<div class="abs" style="left:1389px;top:289.5px;width:8px;height:231px;background:#c2c2c2;border-radius:4px"></div>
<div class="abs" style="z-index:20;left:1376px;top:65px;width:30px;height:110px;background:#fff;box-shadow:-1px 1px 3px rgba(0,0,0,.25)"></div>
<div class="t" style="z-index:21;left:1382px;top:164.8px;font-size:14px;color:#565656;letter-spacing:1.188px;transform-origin:0 0;transform:rotate(-90deg)">EVENT LOG</div>
</body></html>
